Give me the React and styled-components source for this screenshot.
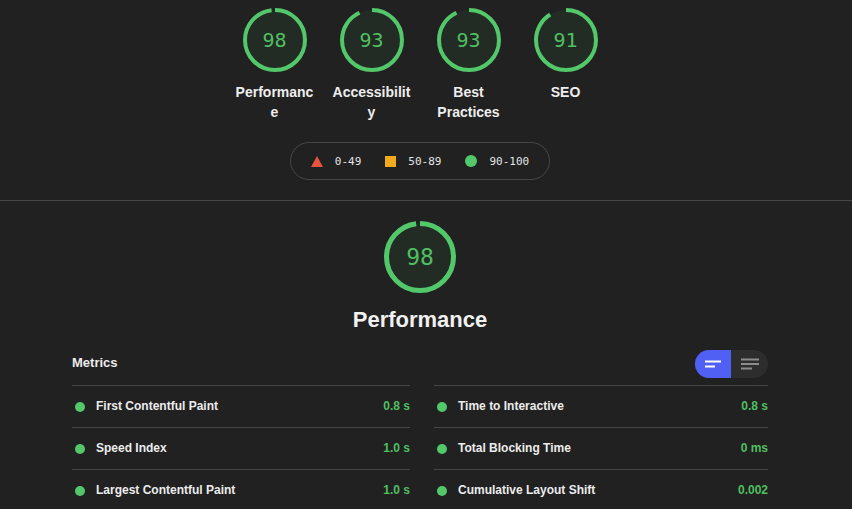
import React from "react";
import styled, { createGlobalStyle } from "styled-components";

const GREEN = "#53c86a";
const GREEN_TEXT = "#4fbf60";

const GlobalStyle = createGlobalStyle`
  html, body { margin: 0; padding: 0; background: #212121; }
  body { font-family: "Liberation Sans", Arial, sans-serif; color: #ececec; }
  * { box-sizing: border-box; }
`;

const Page = styled.div`
  width: 852px;
  min-height: 509px;
  background: #212121;
  overflow: hidden;
`;

const Content = styled.div`
  padding: 0 84px 0 72px;
  display: flex;
  flex-direction: column;
  align-items: center;
`;

const GaugeRow = styled.div`
  display: flex;
  justify-content: center;
  gap: 17px;
  padding-top: 8px;
`;

const GaugeItem = styled.div`
  width: 80px;
  display: flex;
  flex-direction: column;
  align-items: center;
`;

const GaugeWrap = styled.div`
  position: relative;
  width: ${(p) => p.$size}px;
  height: ${(p) => p.$size}px;
`;

const GaugeNumber = styled.div`
  position: absolute;
  inset: 0;
  display: flex;
  align-items: center;
  justify-content: center;
  font-family: "DejaVu Sans Mono", "Liberation Mono", monospace;
  font-size: ${(p) => p.$fs}px;
  color: ${GREEN_TEXT};
`;

const GaugeLabel = styled.div`
  margin-top: 10px;
  width: 80px;
  font-size: 14px;
  font-weight: bold;
  line-height: 20px;
  text-align: center;
  color: #eeeeee;
  overflow-wrap: anywhere;
`;

const Legend = styled.div`
  margin-top: 20px;
  height: 38px;
  padding: 0 20px;
  border: 1px solid #474747;
  border-radius: 19px;
  display: flex;
  align-items: center;
  gap: 24px;
`;

const LegendItem = styled.div`
  display: flex;
  align-items: center;
  gap: 12px;
  font-family: "DejaVu Sans Mono", "Liberation Mono", monospace;
  font-size: 11px;
  color: #e4e4e4;
`;

const Square = styled.span`
  width: 11px;
  height: 11px;
  background: #f2a91d;
  display: block;
`;

const Dot = styled.span`
  width: ${(p) => p.$size || 10}px;
  height: ${(p) => p.$size || 10}px;
  border-radius: 50%;
  background: ${GREEN};
  display: block;
  flex: none;
`;

const Divider = styled.div`
  margin-top: 20px;
  height: 1px;
  background: #474747;
`;

const BigGaugeBox = styled.div`
  margin-top: 20px;
`;

const Title = styled.div`
  margin-top: 13px;
  font-size: 22px;
  font-weight: bold;
  line-height: 28px;
  color: #f1f1f1;
`;

const MetricsHeader = styled.div`
  align-self: stretch;
  margin-top: 16px;
  height: 28px;
  display: flex;
  align-items: center;
  justify-content: space-between;
`;

const MetricsTitle = styled.div`
  font-size: 13px;
  font-weight: bold;
  color: #ececec;
  margin-bottom: 4px;
`;

const Toggle = styled.div`
  display: flex;
  height: 28px;
  border-radius: 14px;
  overflow: hidden;
`;

const ToggleButton = styled.div`
  width: ${(p) => (p.$active ? 36 : 37)}px;
  height: 28px;
  display: flex;
  align-items: center;
  justify-content: center;
  background: ${(p) => (p.$active ? "#5160f4" : "#2d2d2d")};
`;

const MetricsGrid = styled.div`
  align-self: stretch;
  margin-top: 7px;
  display: grid;
  grid-template-columns: 338px 334px;
  column-gap: 24px;
`;

const MetricRow = styled.div`
  height: 42px;
  border-top: 1px solid #464646;
  display: flex;
  align-items: center;
  padding-left: 3px;
  gap: 11px;
`;

const MetricName = styled.div`
  flex: 1;
  font-size: 12px;
  font-weight: bold;
  color: #ececec;
  margin-bottom: 1px;
`;

const MetricValue = styled.div`
  font-size: 12px;
  font-weight: bold;
  color: ${GREEN_TEXT};
  margin-bottom: 1px;
`;

function Gauge({ score, size, stroke, fs }) {
  const r = (size - stroke) / 2;
  const c = 2 * Math.PI * r;
  const len = (score / 100) * c;
  return (
    <GaugeWrap $size={size}>
      <svg width={size} height={size} viewBox={`0 0 ${size} ${size}`}>
        <circle cx={size / 2} cy={size / 2} r={r} fill="rgba(60, 200, 100, 0.07)" />
        <circle
          cx={size / 2}
          cy={size / 2}
          r={r}
          fill="none"
          stroke={GREEN}
          strokeWidth={stroke}
          strokeDasharray={`${len} ${c}`}
          transform={`rotate(-90 ${size / 2} ${size / 2})`}
        />
      </svg>
      <GaugeNumber $fs={fs}>{score}</GaugeNumber>
    </GaugeWrap>
  );
}

const categories = [
  { score: 98, label: "Performance" },
  { score: 93, label: "Accessibility" },
  { score: 93, label: "Best Practices" },
  { score: 91, label: "SEO" },
];

const metrics = [
  ["First Contentful Paint", "0.8 s"],
  ["Time to Interactive", "0.8 s"],
  ["Speed Index", "1.0 s"],
  ["Total Blocking Time", "0 ms"],
  ["Largest Contentful Paint", "1.0 s"],
  ["Cumulative Layout Shift", "0.002"],
];

export default function App() {
  return (
    <Page>
      <GlobalStyle />
      <Content>
        <GaugeRow>
          {categories.map((c) => (
            <GaugeItem key={c.label}>
              <Gauge score={c.score} size={64} stroke={4} fs={20} />
              <GaugeLabel>{c.label}</GaugeLabel>
            </GaugeItem>
          ))}
        </GaugeRow>
        <Legend>
          <LegendItem>
            <svg width="12" height="11" viewBox="0 0 12 11">
              <polygon points="6,0 12,11 0,11" fill="#e6533f" />
            </svg>
            <span>0-49</span>
          </LegendItem>
          <LegendItem>
            <Square />
            <span>50-89</span>
          </LegendItem>
          <LegendItem>
            <Dot $size={12} />
            <span>90-100</span>
          </LegendItem>
        </Legend>
      </Content>
      <Divider />
      <Content>
        <BigGaugeBox>
          <Gauge score={98} size={72} stroke={5} fs={23} />
        </BigGaugeBox>
        <Title>Performance</Title>
        <MetricsHeader>
          <MetricsTitle>Metrics</MetricsTitle>
          <Toggle>
            <ToggleButton $active>
              <svg width="18" height="10" viewBox="0 0 18 10">
                <rect x="1" y="1.5" width="16" height="2" fill="#ffffff" />
                <rect x="1" y="6.5" width="10" height="2" fill="#ffffff" />
              </svg>
            </ToggleButton>
            <ToggleButton>
              <svg width="20" height="12" viewBox="0 0 20 12">
                <rect x="1" y="0.5" width="18" height="2" fill="#8c8c8c" />
                <rect x="1" y="5" width="18" height="2" fill="#8c8c8c" />
                <rect x="1" y="9.5" width="11" height="2" fill="#8c8c8c" />
              </svg>
            </ToggleButton>
          </Toggle>
        </MetricsHeader>
        <MetricsGrid>
          {metrics.map(([name, value]) => (
            <MetricRow key={name}>
              <Dot />
              <MetricName>{name}</MetricName>
              <MetricValue>{value}</MetricValue>
            </MetricRow>
          ))}
        </MetricsGrid>
      </Content>
    </Page>
  );
}
